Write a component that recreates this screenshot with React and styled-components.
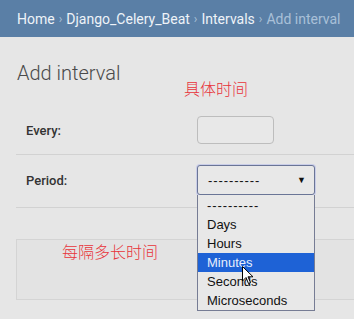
import React from "react";
import styled, { createGlobalStyle } from "styled-components";

const Global = createGlobalStyle`
  html, body { margin: 0; padding: 0; }
  body {
    background: #e6e6e6;
    font-family: Roboto, "Liberation Sans", Arial, sans-serif;
    width: 354px;
    height: 319px;
    overflow: hidden;
  }
`;

const Page = styled.div`
  position: relative;
  width: 354px;
  height: 319px;
  overflow: hidden;
`;

const Breadcrumbs = styled.div`
  height: 37px;
  background: #5a7fa6;
  display: flex;
  align-items: center;
  padding-left: 17px;
  font-size: 14px;
  color: #a9c0d8;
  white-space: nowrap;
`;

const Crumb = styled.span`
  color: #eef3f8;
`;

const Sep = styled.span`
  color: #a9c0d8;
  margin: 0 4px;
  font-size: 12px;
`;

const Content = styled.div`
  padding: 0 0 0 16px;
`;

const Title = styled.h1`
  margin: 0;
  padding: 24px 0 0 1px;
  height: 45px;
  box-sizing: border-box;
  font-size: 20px;
  font-weight: 300;
  color: #4a4a4a;
  line-height: 24px;
`;

const Form = styled.div`
  padding-top: 24px;
`;

const Row = styled.div`
  display: flex;
  align-items: center;
  padding: ${(p) => p.$pt}px 0 ${(p) => p.$pb}px 10px;
  border-bottom: 1px solid #d2d2d2;
`;

const Label = styled.label`
  width: 171px;
  font-size: 13px;
  font-weight: 500;
  color: #333;
`;

const Input = styled.div`
  width: 77px;
  height: 28px;
  box-sizing: border-box;
  border: 1px solid #bdbdbd;
  border-radius: 4px;
  background: #e8e8e8;
`;

const SelectWrap = styled.div`
  position: relative;
`;

const Select = styled.div`
  width: 118px;
  height: 30px;
  box-sizing: border-box;
  border: 1px solid #6a7596;
  border-radius: 3px;
  box-shadow: 0 0 0 1px #c9cde8;
  background: #e8e8e8;
  display: flex;
  align-items: center;
  justify-content: space-between;
  padding: 0 8px 0 10px;
  font-family: "Liberation Sans", Arial, sans-serif;
  font-size: 13px;
  color: #111;
`;

const Dashes = styled.span`
  letter-spacing: 0.9px;
`;

const Arrow = styled.span`
  font-size: 9px;
  color: #111;
`;

const List = styled.ul`
  position: absolute;
  left: 0;
  top: 30px;
  width: 118px;
  box-sizing: border-box;
  margin: 0;
  padding: 1px 0 0;
  list-style: none;
  background: #e8e8e8;
  border: 1px solid #767c94;
  border-top: none;
  z-index: 5;
`;

const Item = styled.li`
  height: 19px;
  line-height: 19px;
  padding-left: 9px;
  font-family: "Liberation Sans", Arial, sans-serif;
  font-size: 13px;
  letter-spacing: ${(p) => (p.$dash ? "0.9px" : "normal")};
  color: ${(p) => (p.$active ? "#e6eefc" : "#111")};
  background: ${(p) => (p.$active ? "#1e62d6" : "transparent")};
`;

const Box = styled.div`
  margin-top: 31px;
  height: 59px;
  border: 1px solid #d4d4d4;
  border-right: none;
  background: #e3e3e3;
`;

const Note = styled.span`
  position: absolute;
  left: ${(p) => p.$x}px;
  top: ${(p) => p.$y}px;
  font-family: "Noto Sans CJK SC", sans-serif;
  font-size: 16px;
  font-weight: 300;
  line-height: 18px;
  color: #e8333a;
  z-index: 6;
`;

const Cursor = styled.svg`
  position: absolute;
  left: 242px;
  top: 266px;
  z-index: 7;
`;

export default function App() {
  return (
    <Page>
      <Global />
      <Breadcrumbs>
        <Crumb>Home</Crumb>
        <Sep>›</Sep>
        <Crumb>Django_Celery_Beat</Crumb>
        <Sep>›</Sep>
        <Crumb>Intervals</Crumb>
        <Sep>›</Sep>
        <span>Add interval</span>
      </Breadcrumbs>
      <Content>
        <Title>Add interval</Title>
        <Form>
          <Row $pt={10} $pb={10}>
            <Label>Every:</Label>
            <Input />
          </Row>
          <Row $pt={10} $pb={12}>
            <Label>Period:</Label>
            <SelectWrap>
              <Select>
                <Dashes>----------</Dashes>
                <Arrow>▼</Arrow>
              </Select>
              <List>
                <Item $dash>----------</Item>
                <Item>Days</Item>
                <Item>Hours</Item>
                <Item $active>Minutes</Item>
                <Item>Seconds</Item>
                <Item>Microseconds</Item>
              </List>
            </SelectWrap>
          </Row>
        </Form>
        <Box />
      </Content>
      <Note $x={184} $y={79}>具体时间</Note>
      <Note $x={62} $y={242}>每隔多长时间</Note>
      <Cursor width="12" height="19" viewBox="0 0 12 19">
        <path d="M0.5 0.5 L0.5 15 L4 11.5 L6.5 17.5 L8.5 16.5 L6 10.8 L11 10.8 Z" fill="#fff" stroke="#000" strokeWidth="1" />
      </Cursor>
    </Page>
  );
}
